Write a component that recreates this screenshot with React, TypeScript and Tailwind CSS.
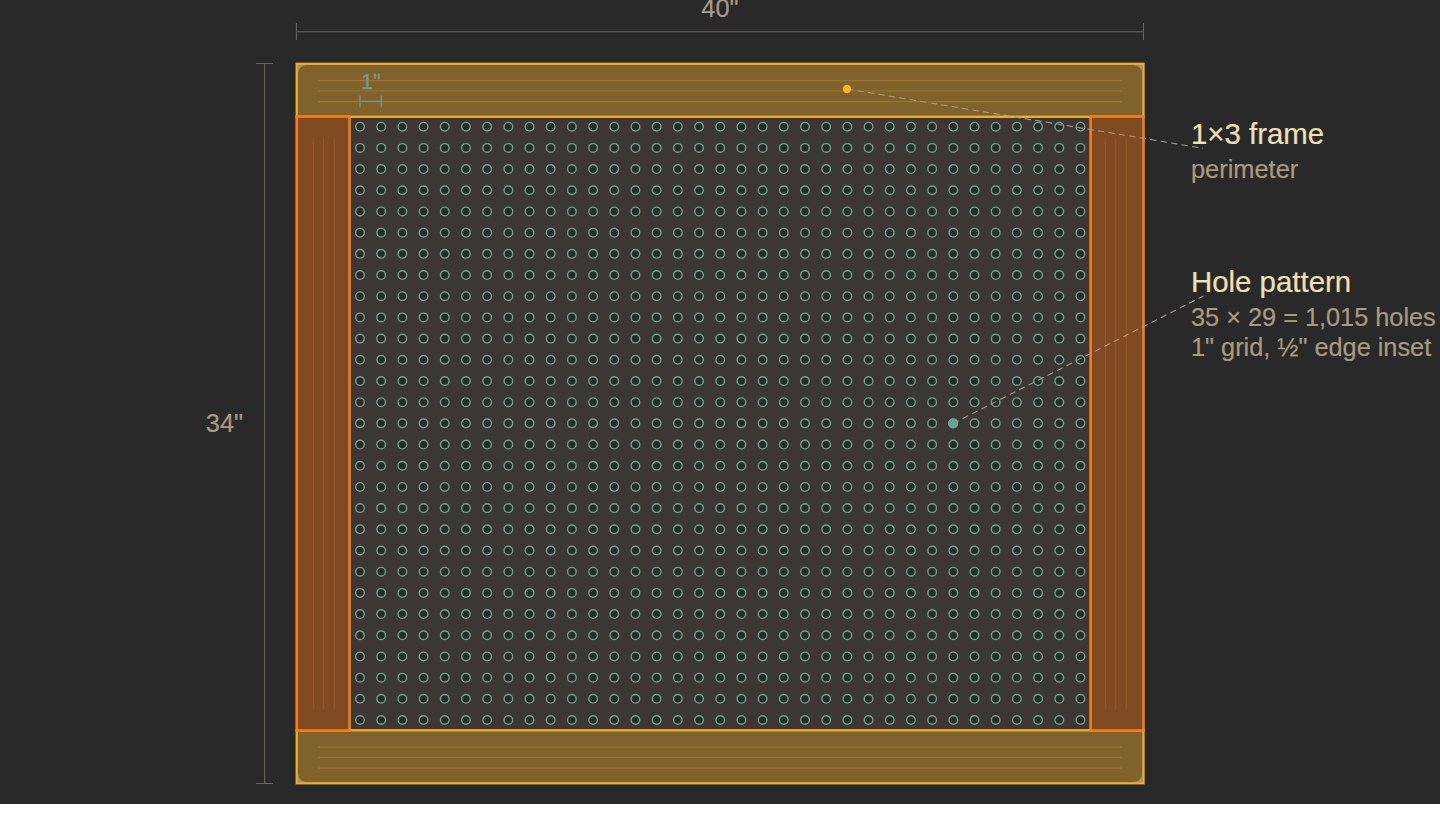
const HOLE_XS = Array.from({ length: 35 }, (_, i) => 360 + i * 21.19);
const HOLE_YS = Array.from({ length: 29 }, (_, i) => 126.7 + i * 21.19);
const LABEL = { fontFamily: '"Liberation Sans", Arial, sans-serif' };

function HorizontalRail({ y, corners }: { y: number; corners: string[] }) {
  return (
    <g>
      <rect x={296.7} y={y} width={846.8} height={53} className="fill-[#80632c] stroke-[#f0ae2e]" strokeWidth={2.3} />
      {corners.map((d) => (
        <path key={d} d={d} className="fill-[#a8956c]" />
      ))}
      {[16.8, 27.2, 37.8].map((dy) => (
        <line key={dy} x1={318} x2={1122} y1={y + dy} y2={y + dy} className="stroke-[#9a7428]" strokeWidth={1.06} />
      ))}
    </g>
  );
}

function SideRail({ x, width, offsets }: { x: number; width: number; offsets: number[] }) {
  return (
    <g>
      <rect x={x} y={116.5} width={width} height={614} className="fill-[#804a22] stroke-[#f57f17]" strokeWidth={2.6} />
      {offsets.map((dx) => (
        <line key={dx} x1={x + dx} x2={x + dx} y1={137.5} y2={709.5} className="stroke-[#99562a]" strokeWidth={1.06} />
      ))}
    </g>
  );
}

export default function App() {
  return (
    <div className="h-[826px] w-full overflow-hidden bg-white">
      <div className="h-[804px] bg-[#292929]">
        <svg width={1440} height={804} viewBox="0 0 1440 804" className="block">
          <rect x={350} y={116} width={740} height={614} className="fill-[#3b3734]" />
          {HOLE_YS.map((cy) =>
            HOLE_XS.map((cx) => (
              <circle key={`${cx}-${cy}`} cx={cx} cy={cy} r={4.3} className="fill-[#2a2a2a] stroke-[#72a090]" strokeWidth={1.4} />
            ))
          )}
          <HorizontalRail
            y={63.8}
            corners={["M298 65h8q-7 1-8 8z", "M1142.2 65h-8q7 1 8 8z"]}
          />
          <HorizontalRail
            y={730.3}
            corners={["M298 782h8q-7-1-8-8z", "M1142.2 782h-8q7-1 8-8z"]}
          />
          <SideRail x={296.7} width={52.9} offsets={[16.6, 27, 37.6]} />
          <SideRail x={1090.6} width={52.9} offsets={[14.7, 25.2, 35.7]} />

          <g className="stroke-[#6b665a]" strokeWidth={1.06}>
            <line x1={296.5} x2={1143.5} y1={31.8} y2={31.8} />
            <line x1={296.4} x2={296.4} y1={23} y2={40} />
            <line x1={1143.5} x2={1143.5} y1={23} y2={40} />
            <line x1={264.7} x2={264.7} y1={63.5} y2={783.5} />
            <line x1={256} x2={273} y1={63.5} y2={63.5} />
            <line x1={256} x2={273} y1={783.5} y2={783.5} />
          </g>

          <g className="stroke-[#76917f]" strokeWidth={1.5}>
            <line x1={360} x2={381} y1={101.3} y2={101.3} />
            <line x1={360} x2={360} y1={95.5} y2={107.5} />
            <line x1={381.3} x2={381.3} y1={95.5} y2={107.5} />
          </g>

          <line x1={847} y1={89} x2={1203} y2={148.3} className="stroke-[#a89c88]" strokeWidth={1.06} strokeDasharray="6.36 4.24" />
          <line x1={953} y1={423.5} x2={1203.5} y2={296} className="stroke-[#a89c88]" strokeWidth={1.06} strokeDasharray="6.36 4.24" />
          <circle cx={847} cy={89} r={4.2} className="fill-[#fbb726]" />
          <circle cx={953} cy={423.5} r={5} className="fill-[#72a090]" />

          <g style={LABEL}>
            <text x={720} y={17} textAnchor="middle" strokeWidth={0.2} className="fill-[#a89a84] stroke-[#a89a84] text-[25.4px]">40"</text>
            <text x={224.5} y={432} textAnchor="middle" strokeWidth={0.2} className="fill-[#a89a84] stroke-[#a89a84] text-[25.4px]">34"</text>
            <text x={371} y={89} textAnchor="middle" strokeWidth={0.3} className="fill-[#78998a] stroke-[#78998a] text-[21.2px]">1"</text>
            <text x={1191} y={144} strokeWidth={0.2} className="fill-[#f0e0b8] stroke-[#f0e0b8] text-[29.4px]">1×3 frame</text>
            <text x={1191} y={177.5} strokeWidth={0.2} className="fill-[#a89a84] stroke-[#a89a84] text-[25.4px]">perimeter</text>
            <text x={1191} y={292} strokeWidth={0.2} className="fill-[#f0e0b8] stroke-[#f0e0b8] text-[29.4px]">Hole pattern</text>
            <text x={1191} y={325.5} strokeWidth={0.2} className="fill-[#a89a84] stroke-[#a89a84] text-[25.3px]">35 × 29 = 1,015 holes</text>
            <text x={1191} y={356} strokeWidth={0.2} className="fill-[#a89a84] stroke-[#a89a84] text-[25.3px]">1" grid, ½" edge inset</text>
          </g>
        </svg>
      </div>
    </div>
  );
}
